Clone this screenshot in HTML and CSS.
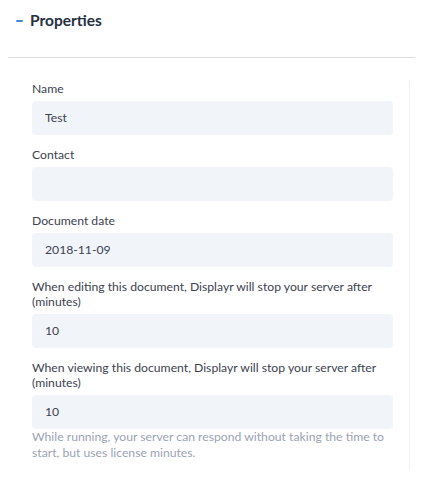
FILE: index.html
```html
<!DOCTYPE html>
<html>
<head>
<meta charset="utf-8">
<link rel="stylesheet" href="styles.css">
</head>
<body>
<div class="section-head">
  <span class="toggle" aria-label="Collapse"></span>
  <h2 class="title">Properties</h2>
</div>
<div class="divider"></div>
<div class="panel">
  <div class="field">
    <label class="label">Name</label>
    <div class="input">Test</div>
  </div>
  <div class="field">
    <label class="label">Contact</label>
    <div class="input"></div>
  </div>
  <div class="field">
    <label class="label">Document date</label>
    <div class="input">2018-11-09</div>
  </div>
  <div class="field">
    <label class="label">When editing this document, Displayr will stop your server after (minutes)</label>
    <div class="input">10</div>
  </div>
  <div class="field last">
    <label class="label">When viewing this document, Displayr will stop your server after (minutes)</label>
    <div class="input">10</div>
    <p class="help">While running, your server can respond without taking the time to start, but uses license minutes.</p>
  </div>
</div>
</body>
</html>
```
FILE: styles.css
```css
html, body {
  margin: 0;
  padding: 0;
  background: #ffffff;
}
body {
  font-family: Lato, "Liberation Sans", sans-serif;
  color: #3d4250;
  width: 425px;
}
.section-head {
  display: flex;
  align-items: center;
  gap: 7px;
  padding: 8px 0 0 16px;
  height: 25px;
}
.toggle {
  display: block;
  width: 7px;
  height: 2px;
  background: #3f8ae0;
  border-radius: 1px;
}
.title {
  margin: 0;
  font-size: 15.5px;
  font-weight: 700;
  color: #27303f;
  line-height: 25px;
}
.divider {
  margin: 24px 10px 0 8px;
  height: 1px;
  background: #dcdce2;
}
.panel {
  margin: 23px 15px 0 32px;
  padding: 0 16px 10px 0;
  border-right: 1px solid #f1f1f4;
  display: flex;
  flex-direction: column;
  gap: 12px;
}
.field {
  display: flex;
  flex-direction: column;
}
.label {
  font-size: 12.2px;
  line-height: 15px;
  color: #3d4250;
  margin-bottom: 5px;
}
.input {
  height: 34px;
  background: #f1f4f9;
  border-radius: 4px;
  padding: 0 13px;
  font-size: 12.2px;
  line-height: 34px;
  color: #3d4250;
}
.help {
  margin: 0;
  font-size: 12.2px;
  line-height: 15.5px;
  color: #9aa3b3;
}
```
